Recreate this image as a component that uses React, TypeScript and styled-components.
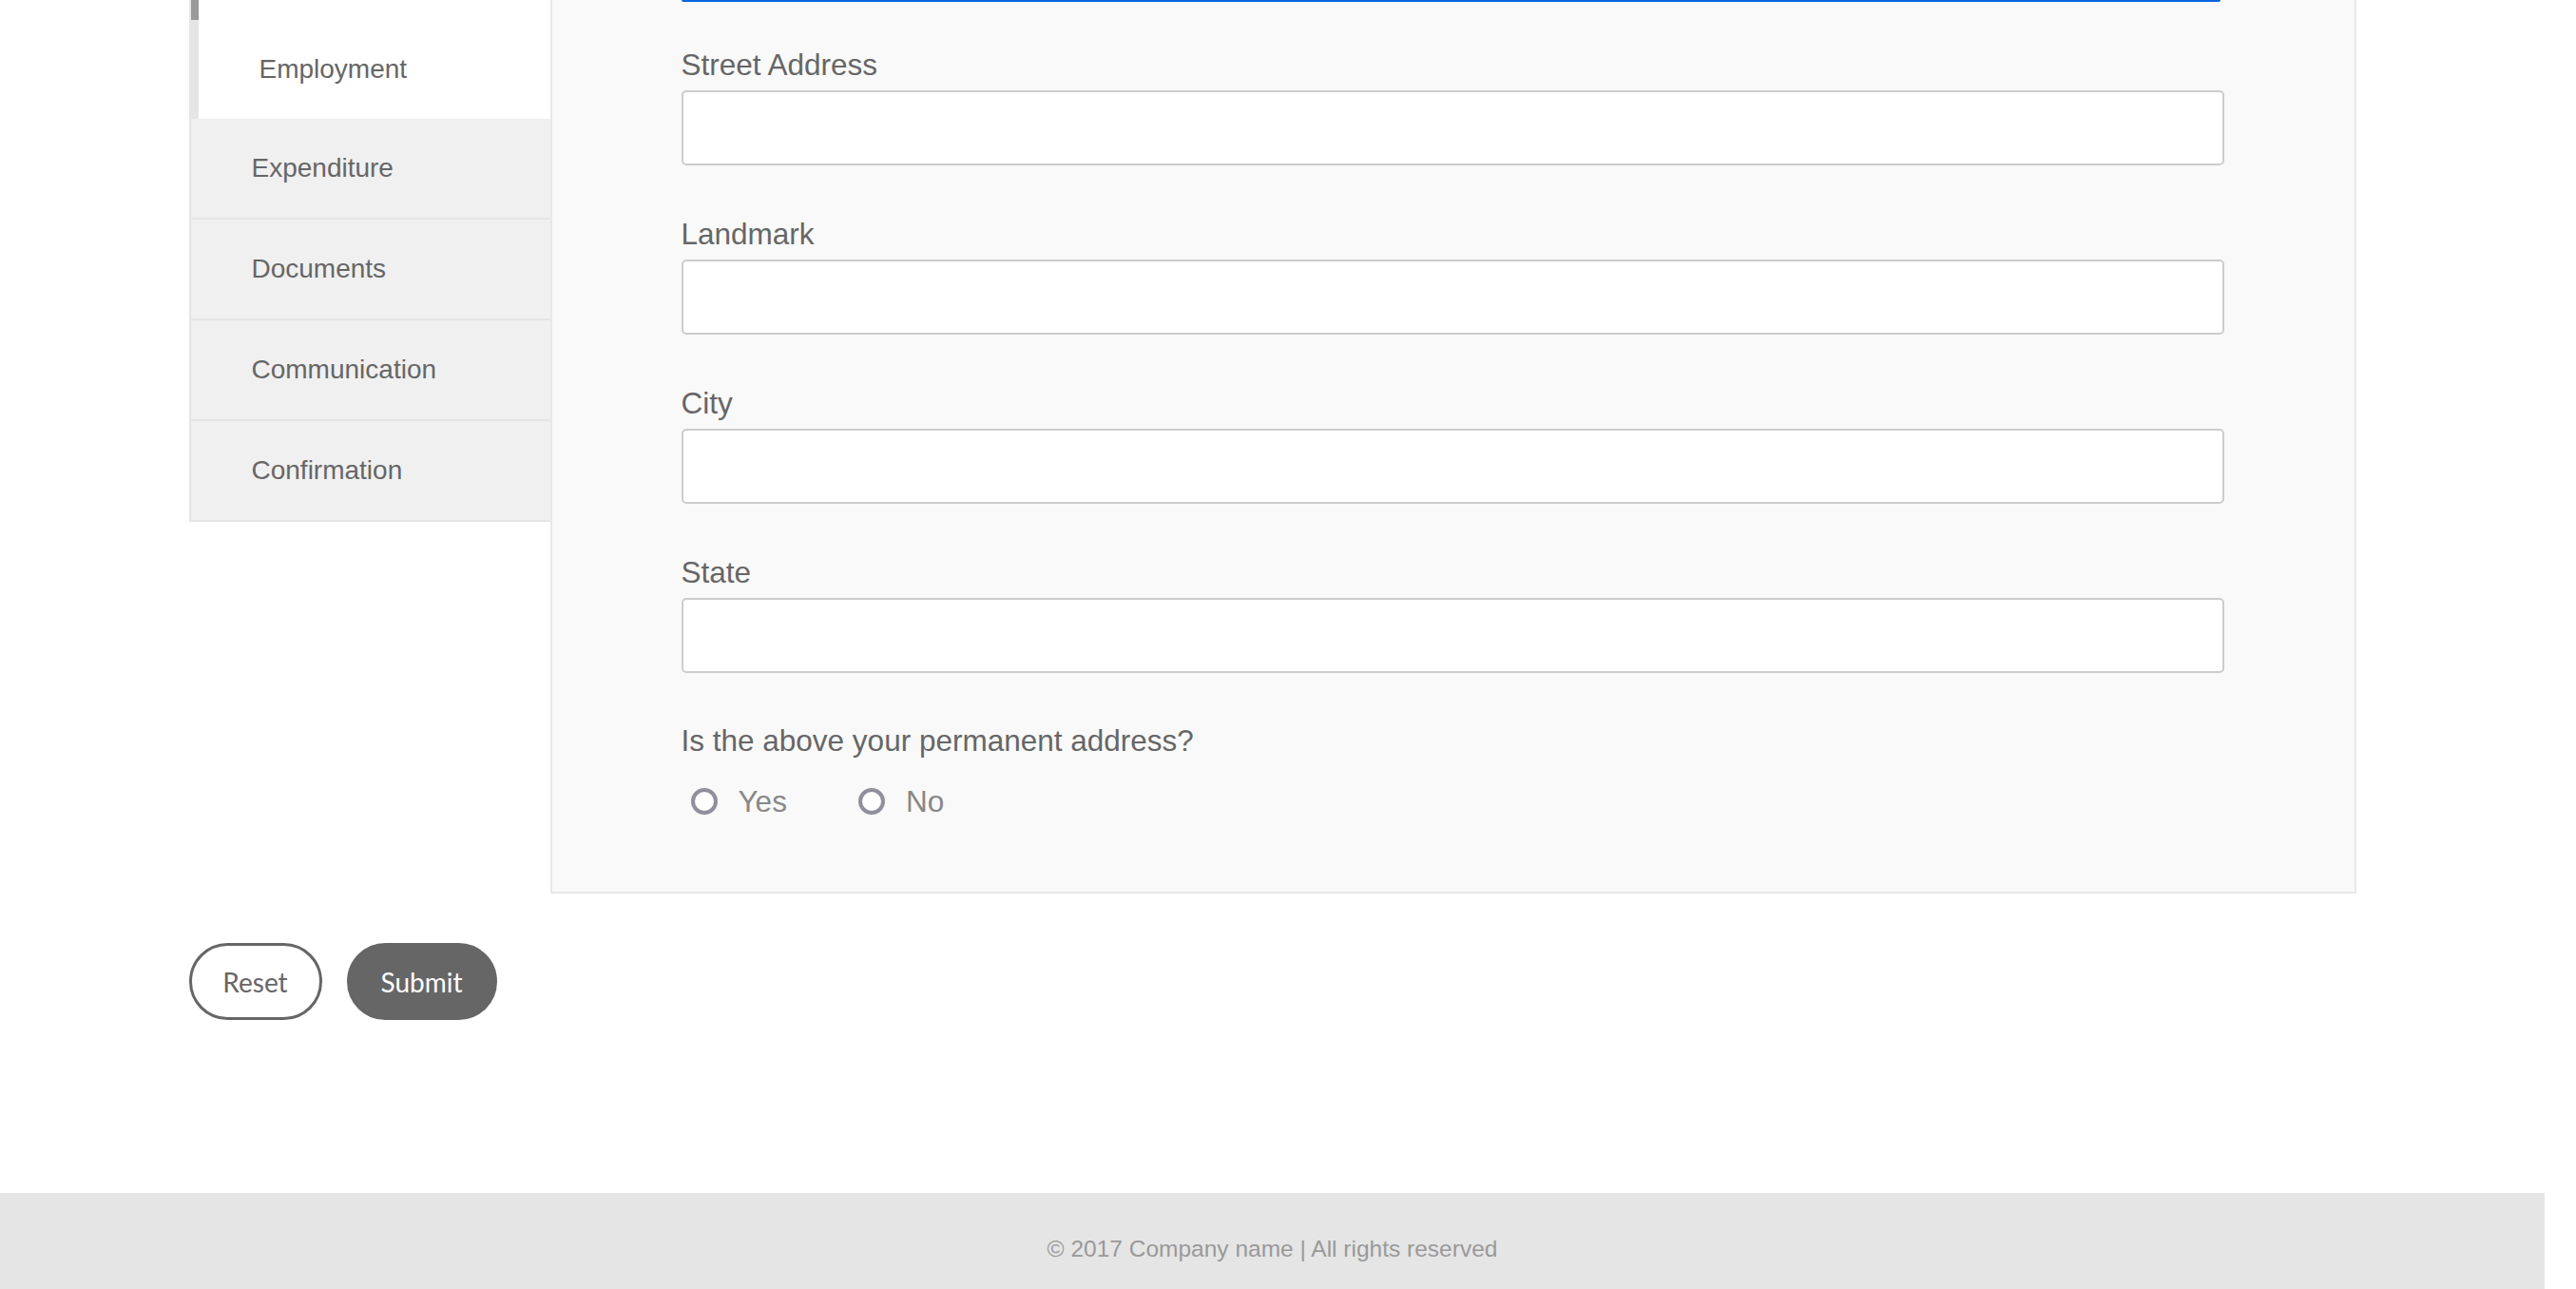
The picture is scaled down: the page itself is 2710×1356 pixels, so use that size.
import React from "react";
import styled, { createGlobalStyle } from "styled-components";

const GlobalStyle = createGlobalStyle`
  html, body {
    margin: 0;
    padding: 0;
    background: #ffffff;
    overflow: hidden;
  }
  body {
    font-family: "Liberation Sans", Arial, sans-serif;
  }
  * { box-sizing: border-box; }
`;

const Page = styled.div`
  width: calc(100vw - 33px);
  min-height: 100vh;
  display: flex;
  flex-direction: column;
`;

const Container = styled.div`
  width: 2280px;
  margin: 0 auto;
`;

const Layout = styled.div`
  display: flex;
  align-items: flex-start;
`;

const Sidebar = styled.nav`
  width: 380px;
  flex: none;
  display: flex;
  flex-direction: column;
  border-left: 2px solid #e5e5e5;
`;

const ActiveTail = styled.div`
  height: 21px;
  background: #ffffff;
  border-left: 8px solid #999999;
`;

const NavItem = styled.div<{ $current?: boolean }>`
  height: ${(p) => (p.$current ? "104px" : "106px")};
  display: flex;
  align-items: center;
  padding-left: 64px;
  font-size: 28px;
  color: #666666;
  background: ${(p) => (p.$current ? "#ffffff" : "#f0f0f0")};
  border-left: ${(p) => (p.$current ? "8px solid #e5e5e5" : "none")};
  border-bottom: ${(p) => (p.$current ? "none" : "2px solid #e5e5e5")};
`;

const Panel = styled.section`
  flex: 1;
  background: #f9f9f9;
  border: 2px solid #e8e8e8;
  border-top: none;
  padding: 0 137px 77px 136px;
`;

const FocusTail = styled.div`
  height: 2px;
  margin: 0 4px 0 0;
  background: #0a63e0;
  border-radius: 0 0 3px 3px;
`;

const FormGroup = styled.div<{ $first?: boolean }>`
  margin-top: ${(p) => (p.$first ? "48px" : "54px")};
  display: flex;
  flex-direction: column;
`;

const Label = styled.label`
  font-size: 31.5px;
  line-height: 36px;
  color: #666666;
  margin-bottom: 9px;
`;

const Input = styled.input`
  height: 79px;
  width: 100%;
  border: 2px solid #cccccc;
  border-radius: 5px;
  background: #ffffff;
  font-size: 28px;
  padding: 0 20px;
  outline: none;
`;

const Question = styled.div`
  margin-top: 53px;
  font-size: 31.5px;
  line-height: 36px;
  color: #666666;
`;

const RadioRow = styled.div`
  margin-top: 28px;
  display: flex;
  align-items: center;
  gap: 75px;
  padding-left: 10px;
`;

const RadioOption = styled.label`
  display: flex;
  align-items: center;
  gap: 22px;
  font-size: 31.5px;
  line-height: 36px;
  color: #888888;
`;

const RadioCircle = styled.span`
  width: 28px;
  height: 28px;
  border-radius: 50%;
  border: 4px solid #8f8f9d;
  background: #ffffff;
  flex: none;
`;

const ButtonRow = styled.div`
  margin-top: 52px;
  display: flex;
  gap: 26px;
`;

const PillButton = styled.button<{ $primary?: boolean }>`
  height: 81px;
  width: ${(p) => (p.$primary ? "158px" : "140px")};
  border-radius: 41px;
  border: 3px solid #666666;
  background: ${(p) => (p.$primary ? "#666666" : "#ffffff")};
  color: ${(p) => (p.$primary ? "#ffffff" : "#666666")};
  font-family: Lato, "Open Sans", sans-serif;
  font-size: 28px;
  padding: 0;
  cursor: pointer;
`;

const Footer = styled.footer`
  margin-top: 182px;
  height: 118px;
  background: #e5e5e5;
  display: flex;
  align-items: center;
  justify-content: center;
  font-size: 24.5px;
  color: #999999;
`;

const fields = ["Street Address", "Landmark", "City", "State"];
const navItems = ["Expenditure", "Documents", "Communication", "Confirmation"];

export default function App() {
  return (
    <>
      <GlobalStyle />
      <Page>
        <Container>
          <Layout>
            <Sidebar>
              <ActiveTail />
              <NavItem $current>Employment</NavItem>
              {navItems.map((n) => (
                <NavItem key={n}>{n}</NavItem>
              ))}
            </Sidebar>
            <Panel>
              <FocusTail />
              {fields.map((f, i) => (
                <FormGroup key={f} $first={i === 0}>
                  <Label>{f}</Label>
                  <Input type="text" />
                </FormGroup>
              ))}
              <Question>Is the above your permanent address?</Question>
              <RadioRow>
                <RadioOption>
                  <RadioCircle />
                  Yes
                </RadioOption>
                <RadioOption>
                  <RadioCircle />
                  No
                </RadioOption>
              </RadioRow>
            </Panel>
          </Layout>
          <ButtonRow>
            <PillButton type="button">Reset</PillButton>
            <PillButton type="button" $primary>
              Submit
            </PillButton>
          </ButtonRow>
        </Container>
        <Footer>© 2017 Company name | All rights reserved</Footer>
      </Page>
    </>
  );
}
